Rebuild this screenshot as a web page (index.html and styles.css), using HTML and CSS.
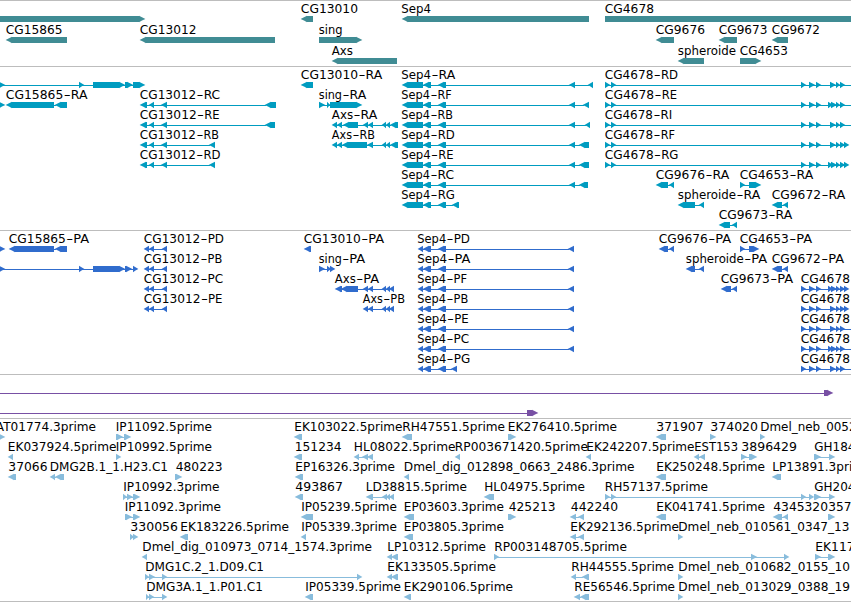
FILE: index.html
```html
<!DOCTYPE html>
<html lang="en">

<head>
    <meta charset="utf-8">
    <title>Genome browser</title>
    <link rel="stylesheet" href="styles.css">
</head>

<body>
    <main class="browser">
        <section class="track gene"><svg id="gene"></svg></section>
        <section class="track mrna"><svg id="mrna"></svg></section>
        <section class="track protein"><svg id="protein"></svg></section>
        <section class="track span"><svg id="span"></svg></section>
        <section class="track est"><svg id="est"></svg></section>
    </main>
    <script src="tracks.js"></script>
</body>

</html>
```

FILE: styles.css
```css
body {
    margin: 0;
    background-color: #fff;
    overflow: hidden;
}

.browser {
    display: flex;
    flex-direction: column;
    width: 851px;
    height: 601px;
    border-bottom: 1px solid #bdbdbd;
}

.track {
    box-sizing: border-box;
    border-top: 1px solid #bdbdbd;
    overflow: hidden;
}

.track svg {
    display: block;
    width: 100%;
    height: 100%;
}

.track text {
    font-family: "DejaVu Sans", sans-serif;
    font-size: 12px;
    fill: #000;
}

.gene {
    height: 66px;
    fill: #408c94;
}

.mrna {
    height: 164px;
    fill: #009cc0;
}

.protein {
    height: 144px;
    fill: #306ccd;
}

.span {
    height: 44px;
    fill: #7850a4;
}

.est {
    height: 183px;
    fill: #88bcdc;
}
```

FILE: tracks.js
```js
// row | strand | blocks | label | label start | label end
// a trailing "~" on the blocks means the feature runs past the right edge
const tracks = {
    gene: `
0|+|-10:145
1|-|6:67|CG15865|6|62
1|-|140:275|CG13012|140|196
0|-|301:313|CG13010|301|357.5
1|+|319:362|sing|319|342
2|-|332:397|Axs|332|352.5
0|-|402:589|Sep4|401.5|430.5
0|+|605:860|CG4678|605|653.5
1|-|656:674|CG9676|656|704.5
1|-|719:737|CG9673|719|767
1|-|772:788|CG9672|772|819.5
2|-|678:704|spheroide|678|735.5
2|+|740:761|CG4653|740|787.5`,
    mrna: `
0|+|-5:5 79:84 93:125 125:133 133:145
1|+|-5:5
1|-|6:54 55:67|CG15865-RA|6|87
1|-|140:147 149:154 161:167 265:276|CG13012-RC|140|219.7
2|-|140:147 149:154 161:167 265:275|CG13012-RE|140|219
3|-|140:147 149:154 161:167 209:215|CG13012-RB|140|218.5
4|-|140:147 149:154 161:167 209:215|CG13012-RD|140|220
0|-|301:313|CG13010-RA|301|381.8
1|+|319:325 327:330 330:362|sing-RA|319|365.7
2|-|332:337 337:342 343:358 363:368 368:373 382:386 386:390 390:398|Axs-RA|332|376.8
3|-|332:337 337:342 342:367 367:373 382:386 386:390 390:398|Axs-RB|332|374.5
0|-|402:423 423:431 438:446 569:575 588:593|Sep4-RA|401.5|454.7
1|-|402:423 423:431 438:446 569:575 583:589|Sep4-RF|401.5|451.3
2|-|402:423 423:431 438:446 569:575 585:590|Sep4-RB|401.5|452.5
3|-|402:423 423:431 438:446 569:575 579:589|Sep4-RD|401.5|454.3
4|-|402:423 423:431 438:446 569:575 579:589|Sep4-RE|401.5|453
5|-|402:423 423:431 438:446 569:575 579:588|Sep4-RC|401.5|453.5
6|-|402:423 423:431 438:446 452:459|Sep4-RG|401.5|454.5
0|+|605:610 611:616 801:806 809:815 816:821 830:836 836:840 840:845~|CG4678-RD|605|677.5
1|+|605:610 611:616 801:806 809:815 816:821 828:833 831:837 836:840 840:845~|CG4678-RE|605|676.5
2|+|605:610 611:616 801:806 809:815 816:821 830:836 836:840 840:845~|CG4678-RI|605|671.7
3|+|605:610 611:616 801:806 809:815 816:821 830:836 836:840 840:845 844:849|CG4678-RF|605|674.5
4|+|605:610 611:616 801:806 809:815 816:821 828:833 831:837 836:840 840:845 844:849|CG4678-RG|605|678
5|-|656:668 669:674|CG9676-RA|656|728.7
5|+|740:745 749:761|CG4653-RA|740|812.7
6|-|678:695 699:704|spheroide-RA|678|759.7
6|-|772:782 783:788|CG9672-RA|772|844.7
7|-|719:730 732:737|CG9673-RA|719|791.7`,
    protein: `
0|+|-5:5
0|-|9:54 55:67|CG15865-PA|9|88.7
1|+|-5:5 79:84 93:125 125:132 133:138
0|-|144:149 149:154 162:167|CG13012-PD|144|223.5
1|-|144:149 149:154 162:167|CG13012-PB|144|221.7
2|-|144:149 149:154 162:167|CG13012-PC|144|222.7
3|-|144:149 149:154 162:167|CG13012-PE|144|222
0|-|304:311|CG13010-PA|304|383.7
1|+|319:325 327:331 330:335|sing-PA|319|364.7
2|-|335:342 341:358 363:368 368:373 382:386 386:390 389:394|Axs-PA|335|378.7
3|-|363:368 368:373 382:386 386:390 389:394|Axs-PB|363|404.5
0|-|418:423 423:431 438:446 568:574|Sep4-PD|417.5|469.5
1|-|418:423 423:431 438:446 568:574|Sep4-PA|417.5|470
2|-|418:423 423:431 438:446 568:574|Sep4-PF|417.5|466.5
3|-|418:423 423:431 438:446 568:574|Sep4-PB|417.5|467.7
4|-|418:423 423:431 438:446 568:574|Sep4-PE|417.5|468.2
5|-|418:423 423:431 438:446 568:574|Sep4-PC|417.5|468.7
6|-|418:423 423:431 438:446 451:457|Sep4-PG|417.5|469.7
0|-|659:668 669:674|CG9676-PA|659|730.7
0|+|740:745 749:759|CG4653-PA|740|811.7
1|-|686:695 699:704|spheroide-PA|686|766.7
1|-|772:782 783:788|CG9672-PA|772|843.7
2|-|721:731 732:737|CG9673-PA|721|792.7
2|+|801:806 809:815 816:821 828:833 831:837 836:840 840:845 844:849|CG4678|801|849.5
3|+|801:806 809:815 816:821 830:836 836:840 840:845 844:849|CG4678|801|849.5
4|+|801:806 809:815 816:821 830:836 836:840 840:845~|CG4678|801|849.5
5|+|801:806 809:815 816:821 828:833 831:837 836:840 840:845~|CG4678|801|849.5
6|+|801:806 809:815 816:821 830:836 836:840 840:845~|CG4678|801|849.5`,
    span: `
0|+|-9:-5 824:833
1|+|-9:-5 527:538`,
    est: `
0|+|-5:5|AT01774.3prime|-4|95.5
0|+|116:123 124:131|IP11092.5prime|116|211.5
0|-|294:302|EK103022.5prime|294.5|402
0|-|402:412|RH47551.5prime|402.5|504.5
0|+|508:516|EK276410.5prime|508|616.5
0|-|656:666|371907|656.5|703
0|+|710:716|374020|710.5|757.5
0|+|760:765|Dmel_neb_0052|760.5|856
1|-|8:13|EK037924.5prime|8|116
1|+|116:121|IP10992.5prime|116|211.5
1|-|294:302|151234|295|341
1|-|354:359 362:368 367:373|HL08022.5prime|354|455
1|-|455:460|RP003671420.5prime|455|587.5
1|-|586:591|EK242207.5prime|586.5|694
1|-|694:699 699:705|EST153|694.5|737.5
1|+|741:747 749:757|3896429|741.5|796.5
1|+|814:821 829:835|GH184|814.5|855
2|-|8:16|37066|8.5|47
2|-|50:55 55:64|DMG2B.1_1.H23.C1|50|167.5
2|+|175:182|480223|176|222
2|-|295:303|EP16326.3prime|295.5|394.5
2|-|404:409|Dmel_dig_012898_0663_2486.3prime|404|634
2|-|656:666|EK250248.5prime|656.5|764.5
2|-|772:781|LP13891.3prime|772.5|871
3|+|123:127 127:133 133:140|IP10992.3prime|123.5|219
3|-|295:303|493867|295.5|342.5
3|-|366:373 382:387 386:390 389:394|LD38815.5prime|366|466.5
3|-|484:494|HL04975.5prime|484.5|584.5
3|+|605:610 611:616 801:806 809:814|RH57137.5prime|605|707.5
3|+|814:821 829:835|GH204|814.5|855
4|+|125:132 133:140|IP11092.3prime|125|220.5
4|-|301:313|IP05239.5prime|301.5|396.5
4|-|404:414|EP03603.3prime|404|503.5
4|+|508:516|425213|509|555
4|-|570:576 578:584|442240|571|617.5
4|-|656:666|EK041741.5prime|656.5|764.5
4|-|773:782 783:788|4345320|773.5|827.5
4|+|828:835|357|828.5|851
5|+|130:134 133:138|330056|130.5|177.5
5|-|180:188|EK183226.5prime|180.5|288.5
5|-|301:306|IP05339.3prime|301.5|396.5
5|-|404:413|EP03805.3prime|404|503.5
5|-|570:576 578:584|EK292136.5prime|570.5|678.5
5|+|678:683|Dmel_neb_010561_0347_13|678.5|849
6|-|142:147|Dmel_dig_010973_0714_1574.3prime|142.5|371.5
6|-|387:392 391:398|LP10312.5prime|387.5|485.5
6|+|494:499 751:757 784:789|RP003148705.5prime|494.5|626.5
6|+|815:821 828:835|EK117|815.5|854
7|+|145:149 149:155 162:167 357:362|DMG1C.2_1.D09.C1|145.5|263.5
7|-|387:392 391:398|EK133505.5prime|387.5|495.5
7|-|571:576 582:589|RH44555.5prime|571.5|673.5
7|+|678:683|Dmel_neb_010682_0155_10|678.5|849.5
8|+|146:149 149:154 162:167|DMG3A.1_1.P01.C1|146.5|262.5
8|-|305:313|IP05339.5prime|305.5|400.5
8|-|404:411|EK290106.5prime|404|512.5
8|-|574:580 580:589|RE56546.5prime|574.5|674.5
8|+|678:683|Dmel_neb_013029_0388_19|678.5|849.5`
};

// six pixel high bar with an arrow head on one end
function block(a, b, y, strand) {
    const head = Math.min(6, b - a);
    const [tip, tail, dir] = strand === '-' ? [a, b, 1] : [b, a, -1];
    const base = tip + dir * head;
    const knee = tip + dir * head * 0.5;
    const points = [
        [tip - dir * 0.4, y + 2.9],
        [knee, y + 1.3],
        [base, y - 0.2],
        [base, y],
        [tail, y],
        [tail, y + 6],
        [base, y + 6],
        [base, y + 6.2],
        [knee, y + 4.6]
    ];
    return `<polygon points="${points.join(' ')}"/>`;
}

function label(text, x, end, y) {
    const attrs = (from, to) => `x="${from - 0.2}" y="${y}" textLength="${to - from + 0.7}" lengthAdjust="spacingAndGlyphs"`;
    const dash = text.indexOf('-');
    if (dash < 0) {
        return `<text ${attrs(x, end)}>${text}</text>`;
    }
    // the dash gets a wider cell than the font gives it
    const widths = { A: 8, B: 6.8, C: 7.8, D: 8.4, E: 6.6, F: 5.6, G: 8.6, I: 3 };
    const mid = end - widths[text.at(-1)] - (text.at(-2) === 'P' ? 7.2 : 8);
    return `<text><tspan ${attrs(x, mid - 8.2)}>${text.slice(0, dash)}</tspan>` +
        `<tspan x="${mid - 7.3}" y="${y}" textLength="7" lengthAdjust="spacingAndGlyphs">-</tspan>` +
        `<tspan ${attrs(mid, end)}>${text.slice(dash + 1)}</tspan></text>`;
}

for (const [id, data] of Object.entries(tracks)) {
    const pitch = id === 'gene' ? 21 : 20;
    let out = '';
    for (const line of data.trim().split('\n')) {
        const [row, strand, spans, text, x, end] = line.split('|');
        const y = 15 + row * pitch;
        const blocks = spans.replace('~', '').split(' ').map(s => s.split(':').map(Number));
        const right = spans.endsWith('~') ? 860 : blocks.at(-1)[0] + 1;
        if (blocks.length > 1) {
            out += `<rect x="${blocks[0][0] + 2}" y="${y + 3}" width="${right - blocks[0][0] - 2}" height="1"/>`;
        }
        out += blocks.map(([a, b]) => block(a, b, y, strand)).join('');
        if (text) {
            out += label(text, +x, +end, y - 3);
        }
    }
    document.getElementById(id).innerHTML = out;
}
```
